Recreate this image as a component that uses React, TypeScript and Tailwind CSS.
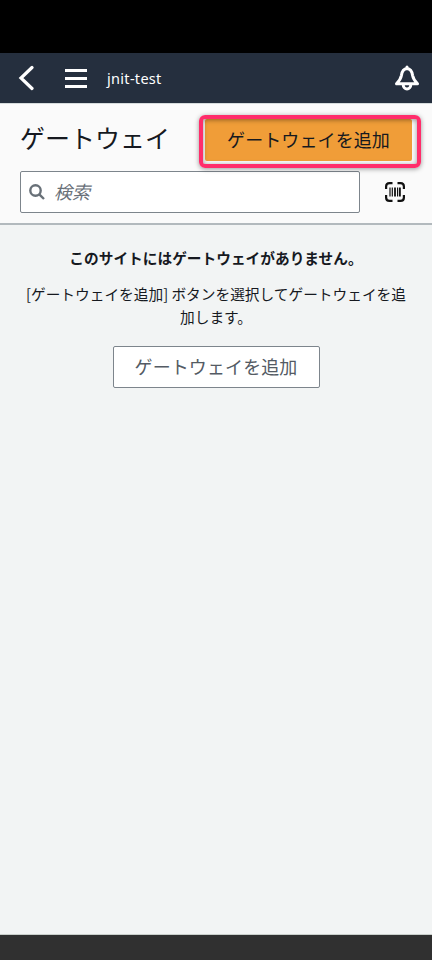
function BackIcon() {
  return (
    <svg width="16" height="26" viewBox="0 0 16 26" fill="none" stroke="#fff" strokeWidth="3.200">
      <path d="M14 2.500 3 13l11 10.500" strokeLinecap="round" />
    </svg>
  );
}

function BellIcon() {
  return (
    <svg width="26" height="26" viewBox="0 0 26 26" fill="none" stroke="#fff" strokeWidth="3" strokeLinejoin="round">
      <path d="M13 3.500C9.500 3.700 8 6.200 7.400 10.500 6.800 14 5 16.200 2.500 18.800h21C21 16.200 19.200 14 18.600 10.500 18 6.200 16.500 3.700 13 3.500Z" />
      <path d="M13 3.500V2" strokeLinecap="round" />
      <path d="M9.200 19.500c0 5.900 7.600 5.900 7.600 0" />
    </svg>
  );
}

function SearchIcon() {
  return (
    <svg width="16" height="16" viewBox="0 0 16 16" fill="none" stroke="#687078" strokeWidth="2.400">
      <circle cx="6.500" cy="6.500" r="5.200" />
      <path d="m10.300 10.300 4.700 4.700" />
    </svg>
  );
}

function BarcodeIcon() {
  return (
    <svg width="20" height="20" viewBox="0 0 20 20" fill="none" stroke="#111">
      <path
        d="M1.100 7V4.500Q1.100 1.100 4.500 1.100H7.500M12.500 1.100h3Q18.900 1.100 18.900 4.500V7M18.900 13v2.500q0 3.400-3.400 3.400h-3M7.500 18.900h-3Q1.100 18.900 1.100 15.500V13"
        strokeWidth="2.200"
      />
      <path d="M5 5.500v9M7.300 5.500v9M12.600 5.500v9" strokeWidth="1.200" />
      <path d="M10 5.500v9M14.900 5.500v9" strokeWidth="1.800" />
    </svg>
  );
}

function TopBar() {
  return (
    <header className="flex h-[50px] shrink-0 items-center bg-[#252f3e] pr-3 pl-[18px] text-white">
      <button aria-label="戻る">
        <BackIcon />
      </button>
      <button aria-label="メニュー" className="ml-[31px] flex w-[22px] flex-col gap-[5px]">
        <span className="h-[3px] bg-white" />
        <span className="h-[3px] bg-white" />
        <span className="h-[3px] bg-white" />
      </button>
      <span className="ml-5 pb-px font-['Noto_Sans',sans-serif] text-[14.500px] leading-5 tracking-[0.3px]">jnit-test</span>
      <button aria-label="通知" className="ml-auto">
        <BellIcon />
      </button>
    </header>
  );
}

export default function App() {
  return (
    <div className="flex h-[960px] w-[432px] flex-col bg-[#f2f4f4] font-['Noto_Sans_CJK_JP',sans-serif] text-[#16191f]">
      <div className="h-[53px] shrink-0 bg-black" />
      <TopBar />

      <section className="h-[122px] shrink-0 border-t border-b-2 border-t-[#d5dbdb] border-b-[#b2b9bd] bg-[#fafafa] px-5 pt-[15px]">
        <div className="flex h-[42px] items-center justify-between">
          <h1 className="h-[42px] text-[25px] leading-[37px] font-normal">ゲートウェイ</h1>
          <div className="relative">
            <button className="block h-[42px] w-[207px] rounded-[2px] bg-[#f09d38] pb-px text-[18px] leading-[41px] tracking-[0.1px]">
              ゲートウェイを追加
            </button>
            <div className="pointer-events-none absolute -top-[4px] -right-[9px] -bottom-[7px] -left-[6px] rounded-[6px] border-4 border-[#ff2d6b] shadow-[0_1px_5px_rgba(0,0,0,0.4),inset_0_1px_5px_rgba(0,0,0,0.4)]" />
          </div>
        </div>
        <div className="mt-[10px] flex items-center">
          <label className="flex h-[42px] w-[340px] items-center gap-[9px] rounded-[2px] border border-[#7d858c] bg-white pl-2">
            <SearchIcon />
            <span className="pb-0.5 text-[18px] leading-[38px] text-[#687078] italic">検索</span>
          </label>
          <button aria-label="バーコードをスキャン" className="ml-[25px]">
            <BarcodeIcon />
          </button>
        </div>
      </section>

      <main className="flex flex-1 flex-col items-center px-5 pt-[21px] text-center text-[14.700px] leading-[23px]">
        <p className="font-bold">このサイトにはゲートウェイがありません。</p>
        <p className="mt-[13px]">
          [ゲートウェイを追加] ボタンを選択してゲートウェイを追加します。
        </p>
        <button className="mt-[18px] h-[42px] w-[207px] rounded-[2px] border border-[#7d858c] bg-white pb-0.5 text-[18px] leading-[38px] tracking-[0.1px] text-[#545b64]">
          ゲートウェイを追加
        </button>
      </main>

      <footer className="h-[26px] shrink-0 border-t border-[#c9cfcb] bg-[#303030]" />
    </div>
  );
}
